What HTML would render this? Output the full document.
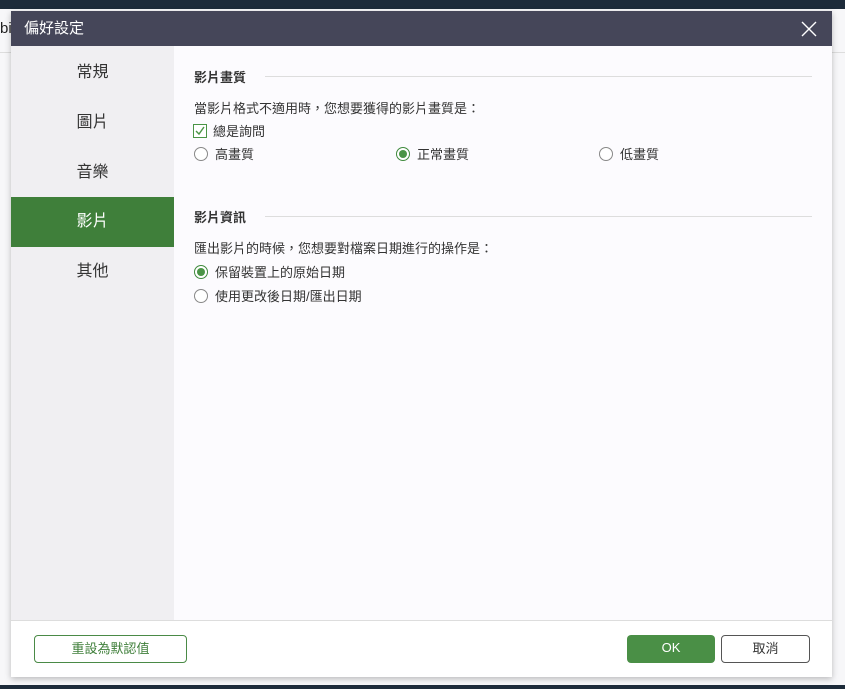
<!DOCTYPE html>
<html><head><meta charset="utf-8"><style>
*{margin:0;padding:0;box-sizing:border-box}
body{width:845px;height:689px;overflow:hidden;background:#f7f7f9;font-family:"Liberation Sans","Noto Sans CJK TC",sans-serif;position:relative}
.top{position:absolute;left:0;top:0;width:845px;height:9px;background:#1d2b3a}
.bot{position:absolute;left:0;top:685px;width:845px;height:4px;background:#1d2b3a}
.bgline{position:absolute;left:0;top:52px;width:845px;height:1px;background:#ddd}
.dlg{position:absolute;left:11px;top:11px;width:821px;height:666px;background:#fcfbfe;box-shadow:0 2px 6px rgba(0,0,0,.25)}
.title{height:35px;background:#454659;color:#fff;font-size:15px;line-height:35px;padding-left:13px}
.close{position:absolute;right:14px;top:9px;width:18px;height:18px}
.side{position:absolute;left:0;top:35px;width:163px;height:574px;background:#f0eff2}
.side div{height:50px;line-height:50px;text-align:center;font-size:16px;color:#333}
.side .act{background:#3f7f3a;color:#fff}
.c{position:absolute;left:183px;font-size:13px;color:#333;white-space:nowrap}
.h{font-weight:bold;font-size:13px}
.hl{position:absolute;height:1px;background:#ddd}
.radio{display:inline-block;width:14px;height:14px;border:1px solid #888;border-radius:50%;vertical-align:-2px;margin-right:7px;position:relative;background:#fff}
.radio.on{border-color:#3f8a3d}
.radio.on:after{content:"";position:absolute;left:2px;top:2px;width:8px;height:8px;border-radius:50%;background:#4a9446}
.chk{display:inline-block;width:14px;height:14px;border:1px solid #4a9446;vertical-align:-2px;margin-right:6px;position:relative;background:#fff}
.foot{position:absolute;left:0;top:609px;width:821px;height:57px;background:#fff;border-top:1px solid #ddd}
.btn{position:absolute;top:14px;height:28px;border-radius:4px;font-size:13px;text-align:center;line-height:26px}
</style></head><body>
<div class="top"></div><div class="bgline"></div><div class="bot"></div>
<div style="position:absolute;left:0;top:20px;font-size:15px;color:#222">bi</div>
<div class="dlg">
<div class="title">偏好設定</div>
<svg class="close" viewBox="0 0 18 18"><path d="M2 2L16 16M16 2L2 16" stroke="#fff" stroke-width="1.4"/></svg>
<div class="side">
<div style="margin-top:2px">常規</div><div>圖片</div><div>音樂</div><div class="act" style="margin-top:-1px">影片</div><div>其他</div></div>
<div class="c h" style="top:56px">影片畫質</div><div class="hl" style="left:254px;top:65px;width:547px"></div>
<div class="c" style="top:87px">當影片格式不適用時，您想要獲得的影片畫質是：</div>
<div class="c" style="top:110px;left:182px"><span class="chk"><svg width="12" height="12" style="position:absolute;left:0;top:0"><path d="M2 6L5 9L10 2" stroke="#4a9446" stroke-width="1.4" fill="none"/></svg></span>總是詢問</div>
<div class="c" style="top:133px;left:183px"><span class="radio"></span>高畫質</div>
<div class="c" style="top:133px;left:385px"><span class="radio on"></span>正常畫質</div>
<div class="c" style="top:133px;left:588px"><span class="radio"></span>低畫質</div>
<div class="c h" style="top:196px">影片資訊</div><div class="hl" style="left:254px;top:205px;width:547px"></div>
<div class="c" style="top:227px">匯出影片的時候，您想要對檔案日期進行的操作是：</div>
<div class="c" style="top:251px"><span class="radio on"></span>保留裝置上的原始日期</div>
<div class="c" style="top:275px"><span class="radio"></span>使用更改後日期/匯出日期</div>
<div class="foot">
<div class="btn" style="left:23px;width:153px;border:1px solid #4a8a46;color:#3f7f3a">重設為默認值</div>
<div class="btn" style="left:616px;width:88px;background:#4a8f46;color:#fff">OK</div>
<div class="btn" style="left:710px;width:89px;border:1px solid #555;color:#333">取消</div>
</div>
</div>
</body></html>
